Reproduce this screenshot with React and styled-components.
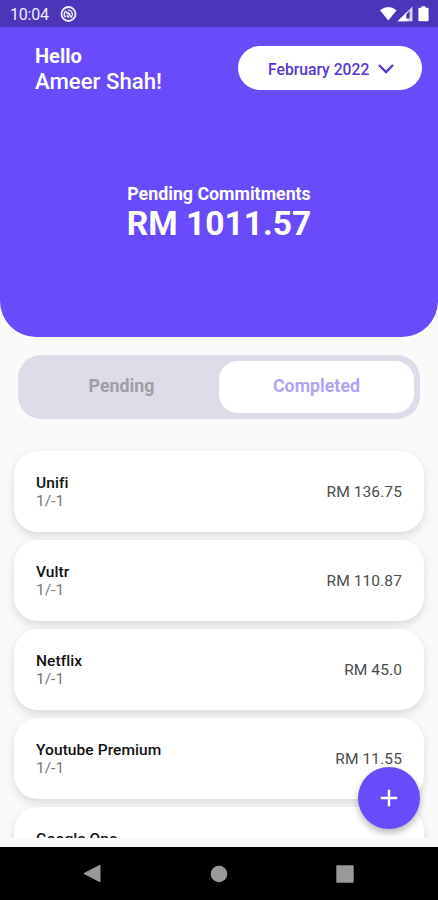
import React from "react";
import styled, { createGlobalStyle } from "styled-components";

const GlobalStyle = createGlobalStyle`
  * { box-sizing: border-box; }
  html, body { margin: 0; background: #fafafa; }
  body { font-family: Roboto, "Liberation Sans", sans-serif; }
  button { font-family: inherit; border: 0; margin: 0; padding: 0; }
`;

const Screen = styled.div`
  position: relative;
  display: flex;
  flex-direction: column;
  width: 438px;
  height: 900px;
  overflow: hidden;
  background: #fafafa;
`;

const Header = styled.header`
  flex: none;
  height: 336.5px;
  overflow: hidden;
  border-radius: 0 0 36px 36px;
  background: #694bfc;
  color: #fff;
`;

const StatusBar = styled.div`
  display: flex;
  align-items: center;
  height: 27px;
  padding: 1px 7px 0 10px;
  background: #4d35b9;
  color: #eeeaff;
  font-size: 16px;
`;

const Clock = styled.span`
  width: 50px;
  letter-spacing: -0.2px;
`;

const StatusIcons = styled.div`
  display: flex;
  align-items: center;
  margin-left: auto;
`;

const TopRow = styled.div`
  display: flex;
  justify-content: space-between;
  padding: 19px 16px 0 35px;
`;

const Greeting = styled.div`
  display: flex;
  flex-direction: column;
`;

const Hello = styled.div`
  font-size: 20px;
  font-weight: 700;
  line-height: 21px;
`;

const Name = styled.div`
  font-weight: 500;
  font-size: 22.2px;
  line-height: 28px;
`;

const MonthButton = styled.button`
  display: flex;
  align-items: center;
  gap: 8px;
  width: 184px;
  height: 44px;
  padding: 2px 0 0 30px;
  border-radius: 22px;
  background: #fff;
  color: #5936cf;
  font-size: 15.7px;
  font-weight: 500;
`;

const Summary = styled.div`
  padding-top: 88px;
  text-align: center;
`;

const SummaryLabel = styled.div`
  font-size: 17.8px;
  font-weight: 700;
  line-height: 22px;
`;

const SummaryAmount = styled.div`
  font-size: 33.6px;
  font-weight: 700;
  line-height: 38px;
`;

const Toggle = styled.div`
  flex: none;
  display: flex;
  width: 402px;
  height: 64px;
  margin: 18.5px 0 0 18px;
  padding: 6px;
  border-radius: 23px;
  background: #dfdce9;
`;

const ToggleOption = styled.button`
  flex: 1;
  padding-bottom: 3px;
  border-radius: 19px;
  font-size: 17.8px;
  font-weight: 700;
  background: ${(p) => (p.$active ? "#fff" : "transparent")};
  color: ${(p) => (p.$active ? "#b3a3f3" : "#a09da5")};
`;

const List = styled.div`
  flex: none;
  display: flex;
  flex-direction: column;
  gap: 8px;
  height: 419px;
  padding: 31.5px 14px 0;
  overflow: hidden;
`;

const Card = styled.div`
  flex: none;
  display: flex;
  align-items: center;
  justify-content: space-between;
  height: 81px;
  padding: 1px 22px 0;
  border-radius: 24px;
  background: #fff;
  box-shadow: 0 4px 10px rgba(0, 0, 0, 0.13);
`;

const CardTitle = styled.div`
  font-size: 15.5px;
  font-weight: 500;
  line-height: 18px;
  letter-spacing: 0.08px;
  color: #111;
`;

const CardCount = styled.div`
  font-size: 15.5px;
  line-height: 18px;
  color: #777;
`;

const CardAmount = styled.div`
  font-size: 15.5px;
  letter-spacing: 0.1px;
  color: #4c4c4c;
`;

const AddButton = styled.button`
  position: absolute;
  right: 18px;
  bottom: 71px;
  display: grid;
  place-items: center;
  width: 62px;
  height: 62px;
  border-radius: 50%;
  background: #694bfc;
  box-shadow: 0 4px 7px rgba(0, 0, 0, 0.28);
`;

const NavBar = styled.nav`
  display: flex;
  justify-content: space-between;
  align-items: center;
  height: 53px;
  margin-top: auto;
  padding: 0 84px 0 83px;
  background: #000;
`;

const items = [
  { title: "Unifi", amount: "RM 136.75" },
  { title: "Vultr", amount: "RM 110.87" },
  { title: "Netflix", amount: "RM 45.0" },
  { title: "Youtube Premium", amount: "RM 11.55" },
  { title: "Google One" },
];

const SyncIcon = () => (
  <svg width="17" height="17" viewBox="0 0 17 17" fill="none" stroke="#eeeaff">
    <circle cx="8.5" cy="8" r="7" strokeWidth="1.8" />
    <path d="M5.6 11.2A4.2 4.2 0 0 1 5 6M7.8 4.2A4.1 4.1 0 0 1 12 10" strokeWidth="1.4" />
    <path d="M4.8 4.8l7.4 6.8M7.6 6.2L10 8.4M6.6 9.4l2.6 2.4" strokeWidth="1.5" />
  </svg>
);

const StatusGlyphs = () => (
  <svg width="52" height="18" viewBox="0 0 52 18">
    <path d="M1 5.2Q9.3-1.3 17.6 5.2L9.3 15.6Z" fill="#fff" />
    <path d="M33.5 1.5V16.3H18.7Z" fill="#d8d1f3" />
    <path d="M28.5 6.5V16.3H18.7Z" fill="#fff" />
    <path d="M27.2 9.4l3.4-3.4v7.5h-3.4Z" fill="#4d35b9" />
    <path d="M42.5 2.8V1.2h4v1.6h2.1q1 0 1 1v11.5q0 1-1 1h-8.2q-1 0-1-1V3.8q0-1 1-1Z" fill="#fff" />
  </svg>
);

export default function App() {
  return (
    <Screen>
      <GlobalStyle />
      <Header>
        <StatusBar>
          <Clock>10:04</Clock>
          <SyncIcon />
          <StatusIcons>
            <StatusGlyphs />
          </StatusIcons>
        </StatusBar>
        <TopRow>
          <Greeting>
            <Hello>Hello</Hello>
            <Name>Ameer Shah!</Name>
          </Greeting>
          <MonthButton>
            February 2022
            <svg width="18" height="12" viewBox="0 0 18 12" fill="none" stroke="#5936cf" strokeWidth="2.3">
              <path d="M2 2l7 7 7-7" />
            </svg>
          </MonthButton>
        </TopRow>
        <Summary>
          <SummaryLabel>Pending Commitments</SummaryLabel>
          <SummaryAmount>RM 1011.57</SummaryAmount>
        </Summary>
      </Header>
      <Toggle>
        <ToggleOption>Pending</ToggleOption>
        <ToggleOption $active>Completed</ToggleOption>
      </Toggle>
      <List>
        {items.map((item) => (
          <Card key={item.title}>
            <div>
              <CardTitle>{item.title}</CardTitle>
              {item.amount && <CardCount>1/-1</CardCount>}
              {!item.amount && <CardCount aria-hidden="true">&nbsp;</CardCount>}
            </div>
            {item.amount && <CardAmount>{item.amount}</CardAmount>}
          </Card>
        ))}
      </List>
      <AddButton aria-label="Add">
        <svg width="18" height="18" viewBox="0 0 18 18" fill="none" stroke="#fff" strokeWidth="2.4">
          <path d="M9 .8v16.4M.8 9h16.4" />
        </svg>
      </AddButton>
      <NavBar>
        <svg width="18" height="20" viewBox="0 0 18 20">
          <path d="M1 9.5L17 1.2v16.6Z" fill="#999" stroke="#999" strokeLinejoin="round" />
        </svg>
        <svg width="18" height="18" viewBox="0 0 18 18">
          <circle cx="9" cy="9" r="8.3" fill="#999" />
        </svg>
        <svg width="18" height="18" viewBox="0 0 18 18">
          <rect x=".3" y=".3" width="17.4" height="17.4" rx="1" fill="#999" />
        </svg>
      </NavBar>
    </Screen>
  );
}
